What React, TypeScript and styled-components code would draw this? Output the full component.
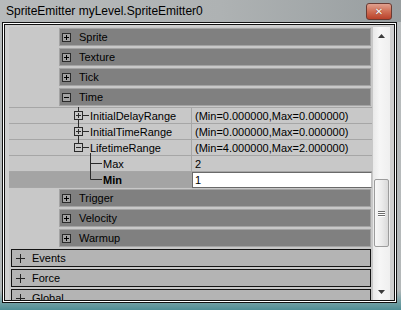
import styled, { createGlobalStyle } from "styled-components";

const GlobalStyle = createGlobalStyle`
  html, body {
    margin: 0;
    padding: 0;
    background: #b0b4b5;
  }
  body {
    font-family: "Liberation Sans", Arial, sans-serif;
  }
`;

const Window = styled.div`
  width: 401px;
  height: 310px;
  box-sizing: border-box;
  display: flex;
  flex-direction: column;
  overflow: hidden;
  background: linear-gradient(
    180deg,
    #a9aeb0 0px,
    #b9bdbe 22px,
    #b4b8b9 290px,
    #6f9ea3 303px,
    #4f8d94 310px
  );
`;

const TitleBar = styled.div`
  height: 22px;
  flex: none;
  display: flex;
  align-items: center;
  justify-content: space-between;
  padding: 0 9px 0 6px;
  background: linear-gradient(90deg, #b7babb 0%, #aeb2b3 55%, #989ea0 100%);
`;

const Title = styled.span`
  font-size: 12px;
  color: #000;
`;

const CloseButton = styled.div`
  width: 26px;
  height: 17px;
  box-sizing: border-box;
  border: 1px solid #6a3b33;
  border-radius: 3px;
  background: linear-gradient(180deg, #e0a08e 0%, #cf6e55 50%, #b9412a 100%);
  display: flex;
  align-items: center;
  justify-content: center;
  color: #fff;
  font-family: "DejaVu Sans", sans-serif;
  font-weight: bold;
  font-size: 10px;
  text-shadow: 0 0 1px #5a1a10;
`;

const Frame = styled.div`
  flex: 1;
  min-height: 0;
  margin: 0 4px 7px 2px;
  border: 1px solid #111;
  padding: 1px;
  background: #fff;
  display: flex;
`;

const Bevel = styled.div`
  flex: 1;
  min-height: 0;
  border: 1px solid #111;
  padding: 2px 4px 0 4px;
  background: #cfcfcf;
  display: flex;
`;

const List = styled.div`
  flex: 1;
  min-width: 0;
  overflow: hidden;
  background: #c8c8c8;
  padding-top: 1px;
  display: flex;
  flex-direction: column;
  font-size: 11px;
  color: #000;
`;

const CategoryHeader = styled.div<{ $gap?: number }>`
  flex: none;
  height: 18px;
  box-sizing: border-box;
  margin: 0 2px ${(p) => p.$gap ?? 2}px 50px;
  border: 1px solid #a3a3a3;
  background: #808080;
  display: flex;
  align-items: center;
  gap: 8px;
  padding-left: 2px;
`;

const PropertyBlock = styled.div`
  flex: none;
  margin: 0 1px 1px 0;
  border-top: 1px solid #a6a6a6;
`;

const PropRow = styled.div`
  height: 16px;
  box-sizing: border-box;
  border-bottom: 1px solid #a6a6a6;
  display: flex;
`;

const NameCell = styled.div<{ $selected?: boolean }>`
  width: 182px;
  flex: none;
  display: flex;
  align-items: center;
  background: ${(p) => (p.$selected ? "#a4a4a4" : "transparent")};
  font-weight: ${(p) => (p.$selected ? "bold" : "normal")};
  white-space: nowrap;
`;

const ValueCell = styled.div<{ $editing?: boolean }>`
  flex: 1;
  display: flex;
  align-items: center;
  border-left: 1px solid #a6a6a6;
  padding-left: ${(p) => (p.$editing ? 0 : 3)}px;
  white-space: nowrap;
`;

const EditBox = styled.div`
  flex: 1;
  height: 16px;
  margin-bottom: -1px;
  box-sizing: border-box;
  background: #fff;
  border: 1px solid #6a6a6a;
  border-right-color: #c0c0c0;
  padding-left: 2px;
  display: flex;
  align-items: center;
`;

const Connector = styled.svg`
  flex: none;
  overflow: visible;
`;

const GroupRow = styled.div`
  flex: none;
  height: 18px;
  box-sizing: border-box;
  margin: 0 2px 2px 2px;
  border: 1px solid #141414;
  background: #b4b4b4;
  display: flex;
  align-items: center;
  gap: 7px;
  padding-left: 4px;
  font-size: 11px;
`;

const Scrollbar = styled.div`
  width: 17px;
  flex: none;
  display: flex;
  flex-direction: column;
  background: linear-gradient(90deg, #e9e9e9 0%, #f6f6f6 40%, #efefef 100%);
`;

const ArrowButton = styled.div`
  height: 17px;
  flex: none;
  display: flex;
  align-items: center;
  justify-content: center;
`;

const Track = styled.div`
  flex: 1;
  display: flex;
  flex-direction: column;
`;

const Thumb = styled.div<{ $offset: number; $size: number }>`
  margin: ${(p) => p.$offset}px 0 0 1px;
  width: 15px;
  height: ${(p) => p.$size}px;
  box-sizing: border-box;
  border: 1px solid #9c9c9c;
  border-radius: 2px;
  background: linear-gradient(90deg, #f8f8f8 0%, #ececec 50%, #d9d9d9 100%);
  display: flex;
  flex-direction: column;
  align-items: center;
  justify-content: center;
  gap: 1px;
`;

const Grip = styled.span`
  width: 7px;
  height: 1px;
  background: #6d6d6d;
  box-shadow: 0 1px 0 #fff;
`;

const LINE = "#2a2a2a";

const ExpandBox = ({ open }: { open?: boolean }) => (
  <svg width="9" height="9" style={{ flex: "none" }}>
    <rect x="0.5" y="0.5" width="8" height="8" fill="#a2a2a2" stroke={LINE} />
    <line x1="2" y1="4.5" x2="7" y2="4.5" stroke="#000" />
    {!open && <line x1="4.5" y1="2" x2="4.5" y2="7" stroke="#000" />}
  </svg>
);

const ThinPlus = () => (
  <svg width="9" height="9" style={{ flex: "none" }}>
    <line x1="0" y1="4.5" x2="9" y2="4.5" stroke="#222" />
    <line x1="4.5" y1="0" x2="4.5" y2="9" stroke="#222" />
  </svg>
);

type Prop = {
  name: string;
  value: string;
  level: 1 | 2;
  box?: "plus" | "minus";
  last?: boolean;
  selected?: boolean;
};

const props: Prop[] = [
  { name: "InitialDelayRange", value: "(Min=0.000000,Max=0.000000)", level: 1, box: "plus" },
  { name: "InitialTimeRange", value: "(Min=0.000000,Max=0.000000)", level: 1, box: "plus" },
  { name: "LifetimeRange", value: "(Min=4.000000,Max=2.000000)", level: 1, box: "minus", last: true },
  { name: "Max", value: "2", level: 2 },
  { name: "Min", value: "1", level: 2, last: true, selected: true },
];

const TreeLines = ({ p }: { p: Prop }) => {
  if (p.level === 1) {
    return (
      <Connector width="81" height="15">
        <line x1="69.5" y1="-1" x2="69.5" y2="3.5" stroke={LINE} />
        {!p.last && <line x1="69.5" y1="11.5" x2="69.5" y2="16" stroke={LINE} />}
        <rect x="65.5" y="3.5" width="8" height="8" fill="none" stroke={LINE} />
        <line x1="67" y1="7.5" x2="72" y2="7.5" stroke={LINE} />
        {p.box === "plus" && <line x1="69.5" y1="5" x2="69.5" y2="10" stroke={LINE} />}
        <line x1="73.5" y1="7.5" x2="80" y2="7.5" stroke={LINE} />
        {p.box === "minus" && <line x1="81.5" y1="13" x2="81.5" y2="16" stroke={LINE} />}
      </Connector>
    );
  }
  return (
    <Connector width="94" height="15">
      <line x1="81.5" y1="-1" x2="81.5" y2={p.last ? 7.5 : 16} stroke={LINE} />
      <line x1="81.5" y1="7.5" x2="93" y2="7.5" stroke={LINE} />
    </Connector>
  );
};

const categoriesTop = ["Sprite", "Texture", "Tick"];
const categoriesBottom = ["Trigger", "Velocity", "Warmup"];
const groups = ["Events", "Force", "Global"];

export default function App() {
  return (
    <>
      <GlobalStyle />
      <Window>
        <TitleBar>
          <Title>SpriteEmitter myLevel.SpriteEmitter0</Title>
          <CloseButton>✕</CloseButton>
        </TitleBar>
        <Frame>
          <Bevel>
            <List>
              {categoriesTop.map((c) => (
                <CategoryHeader key={c}>
                  <ExpandBox />
                  {c}
                </CategoryHeader>
              ))}
              <CategoryHeader $gap={1}>
                <ExpandBox open />
                Time
              </CategoryHeader>
              <PropertyBlock>
                {props.map((p) => (
                  <PropRow key={p.name}>
                    <NameCell $selected={p.selected}>
                      <TreeLines p={p} />
                      {p.name}
                    </NameCell>
                    <ValueCell $editing={p.selected}>
                      {p.selected ? <EditBox>{p.value}</EditBox> : p.value}
                    </ValueCell>
                  </PropRow>
                ))}
              </PropertyBlock>
              {categoriesBottom.map((c) => (
                <CategoryHeader key={c}>
                  <ExpandBox />
                  {c}
                </CategoryHeader>
              ))}
              {groups.map((g) => (
                <GroupRow key={g}>
                  <ThinPlus />
                  {g}
                </GroupRow>
              ))}
            </List>
            <Scrollbar>
              <ArrowButton>
                <svg width="7" height="4">
                  <polygon points="0,4 7,4 3.5,0" fill="#3a3a3a" />
                </svg>
              </ArrowButton>
              <Track>
                <Thumb $offset={135} $size={68}>
                  <Grip />
                  <Grip />
                  <Grip />
                </Thumb>
              </Track>
              <ArrowButton>
                <svg width="7" height="4">
                  <polygon points="0,0 7,0 3.5,4" fill="#3a3a3a" />
                </svg>
              </ArrowButton>
            </Scrollbar>
          </Bevel>
        </Frame>
      </Window>
    </>
  );
}
